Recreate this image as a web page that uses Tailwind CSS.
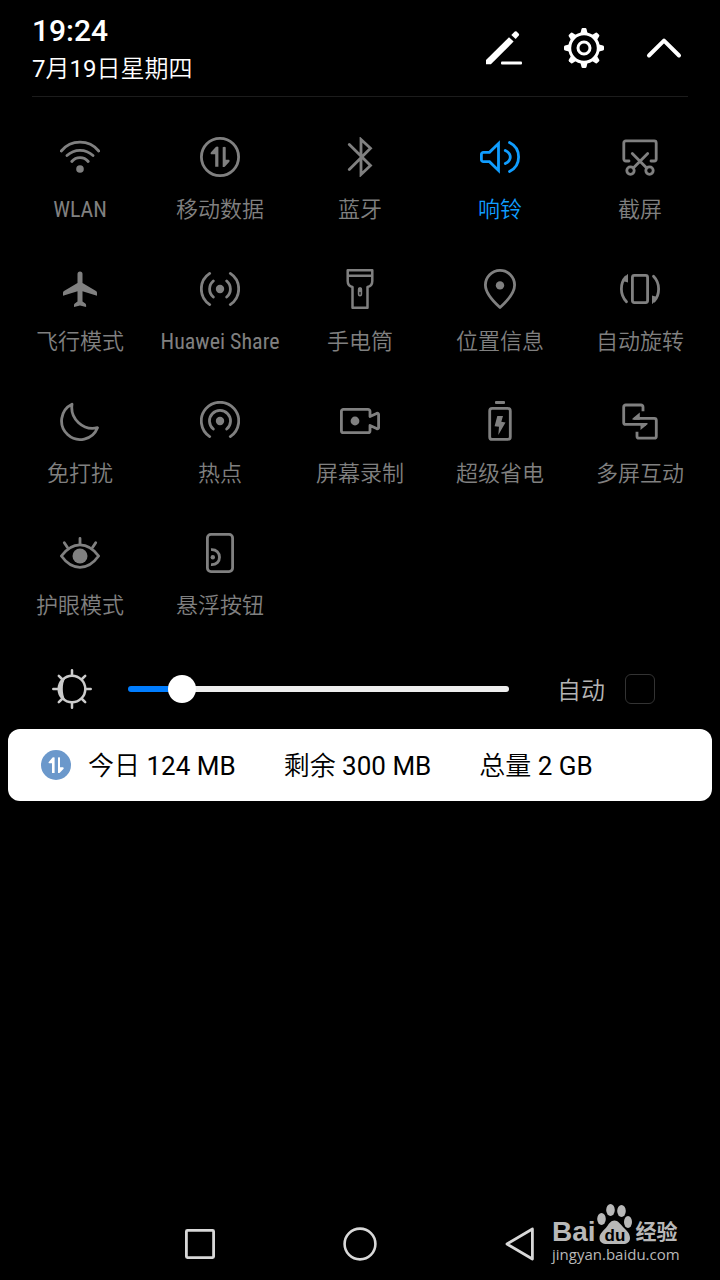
<!DOCTYPE html>
<html lang="zh-CN">
<head>
  <meta charset="UTF-8" />
  <meta name="viewport" content="width=device-width, initial-scale=1.0"/>
  <title>控制中心</title>
  <script src="https://cdn.jsdelivr.net/npm/@tailwindcss/browser@4"></script>
</head>
<body class="bg-black text-white min-h-screen flex flex-col relative font-[Roboto,'Noto_Sans_CJK_SC',sans-serif]">

  <!-- Header -->
  <header class="mx-8 pt-3 pb-2 flex items-center justify-between border-b border-[#1c1c1c]">
    <div>
      <h1 class="text-[30px] leading-[38px] font-medium">19:24</h1>
      <p class="text-2xl leading-[38px]">7<span class="font-[350]">月</span>19<span class="font-[350]">日星期四</span></p>
    </div>
    <div class="flex gap-10 pr-1 pb-1">
      <button type="button" aria-label="编辑">
        <svg class="size-10" viewBox="0 0 40 40" fill="currentColor">
          <path d="M2 36.3V32L25 9.3L29.6 13.6L6.9 36.3Z"/>
          <path d="M30.8 3.6q1-.7 1.8 0l2.2 2.2q.8.9 0 1.8L31.7 11 27.3 6.9Z"/>
          <rect x="17" y="33.6" width="21" height="3" rx="1"/>
        </svg>
      </button>
      <button type="button" aria-label="设置">
        <svg class="size-10" viewBox="0 0 40 40" fill="none" stroke="currentColor">
          <circle cx="20" cy="20" r="14.3" stroke-width="3"/>
          <circle cx="20" cy="20" r="6" stroke-width="3"/>
          <g fill="currentColor" stroke="none">
            <path id="tooth" d="M16.3 6L17.5 1q.3-1 1.2-1h2.6q.9 0 1.2 1L23.7 6Z"/>
            <use href="#tooth" transform="rotate(45 20 20)"/>
            <use href="#tooth" transform="rotate(90 20 20)"/>
            <use href="#tooth" transform="rotate(135 20 20)"/>
            <use href="#tooth" transform="rotate(180 20 20)"/>
            <use href="#tooth" transform="rotate(225 20 20)"/>
            <use href="#tooth" transform="rotate(270 20 20)"/>
            <use href="#tooth" transform="rotate(315 20 20)"/>
          </g>
        </svg>
      </button>
      <button type="button" aria-label="收起">
        <svg class="size-10" viewBox="0 0 40 40" fill="none" stroke="currentColor" stroke-width="4" stroke-linecap="round" stroke-linejoin="round">
          <path d="M5 27.5L20 12.7L35 27.5"/>
        </svg>
      </button>
    </div>
  </header>

  <!-- Shortcuts -->
  <main>
    <div class="grid grid-cols-5 px-[10px] pt-10 text-[22px] leading-[34px] text-[#808080] whitespace-nowrap">
      <button type="button" class="flex flex-col items-center gap-4 pb-[42px]">
        <svg class="size-10" viewBox="0 0 40 40" fill="none" stroke="currentColor" stroke-width="2.8" stroke-linecap="round">
          <path d="M1.3 14A24.3 24.3 0 0 1 38.7 14M7 18.5A18.8 18.8 0 0 1 33 18.5M11.8 24.5A10.6 10.6 0 0 1 28.2 24.5"/>
          <circle cx="20" cy="32" r="3.8" fill="currentColor" stroke="none"/>
        </svg>
        <span class="font-['Roboto_Condensed',Roboto,sans-serif]">WLAN</span>
      </button>
      <button type="button" class="flex flex-col items-center gap-4 pb-[42px]">
        <svg class="size-10" viewBox="0 0 40 40" fill="currentColor">
          <circle cx="20" cy="20" r="18.6" fill="none" stroke="currentColor" stroke-width="2.8"/>
          <path d="M18.4 10V29.7H15.2V17.3H11q-1-.8 0-2L15.8 10q1.3-.8 2.6 0Z"/>
          <path d="M22.7 30V10.3q1.5-1 3 0V22.7H29q1.3.8.3 2L25 29.5q-1 .8-2.3.5Z"/>
        </svg>
        <span class="font-[350]">移动数据</span>
      </button>
      <button type="button" class="flex flex-col items-center gap-4 pb-[42px]">
        <svg class="size-10" viewBox="0 0 40 40" fill="none" stroke="currentColor" stroke-width="2.8" stroke-linecap="round">
          <path d="M9.3 7.6L30.5 28.5L21 37.5V2.5L30.5 11.3L9.3 32.6"/>
        </svg>
        <span class="font-[350]">蓝牙</span>
      </button>
      <button type="button" class="flex flex-col items-center gap-4 pb-[42px] text-[#109dff]">
        <svg class="size-10" viewBox="0 0 40 40" fill="none" stroke="currentColor" stroke-width="2.8" stroke-linecap="round">
          <path d="M18.5 6.5V33.5L9.5 24.7H3.4a2 2 0 0 1-2-2V17.3a2 2 0 0 1 2-2H9.5Z"/>
          <path d="M25.3 13.5Q30.3 16 30.3 20T25.3 26.5M29.5 5.5Q38.6 10 38.6 20T29.5 34.5"/>
        </svg>
        <span class="font-[350]">响铃</span>
      </button>
      <button type="button" class="flex flex-col items-center gap-4 pb-[42px]">
        <svg class="size-10" viewBox="0 0 40 40" fill="none" stroke="currentColor" stroke-width="2.8" stroke-linecap="round">
          <path d="M9 24H5.8a2 2 0 0 1-2-2V5.9a2 2 0 0 1 2-2H34.2a2 2 0 0 1 2 2V22a2 2 0 0 1-2 2H31"/>
          <path d="M12.3 16.5L26.7 31M27.7 16.5L13.3 31"/>
          <circle cx="10.5" cy="33.6" r="3.7"/>
          <circle cx="29.5" cy="33.6" r="3.7"/>
        </svg>
        <span class="font-[350]">截屏</span>
      </button>

      <button type="button" class="flex flex-col items-center gap-4 pb-[42px]">
        <svg class="size-10" viewBox="0 0 40 40" fill="currentColor">
          <path d="M17.5 5a2.5 2.5 0 0 1 5 0V14L36 22q1 .8 1 1.8V26.7L22.5 22.3V32.5L25.3 34.5q.8.6.8 1.5V38L20 36.5 14 38V36q0-.9.8-1.5L17.5 32.5V22.3L3 26.7V23.8q0-1 1-1.8L17.5 14Z"/>
        </svg>
        <span class="font-[350]">飞行模式</span>
      </button>
      <button type="button" class="flex flex-col items-center gap-4 pb-[42px]">
        <svg class="size-10" viewBox="0 0 40 40" fill="none" stroke="currentColor" stroke-width="2.8" stroke-linecap="round">
          <circle cx="20" cy="20" r="4.2" fill="currentColor" stroke="none"/>
          <path d="M13.3 12A10.5 10.5 0 0 0 13.3 28M26.7 12A10.5 10.5 0 0 1 26.7 28M9.7 4.4A18.7 18.7 0 0 0 9.7 35.6M30.3 4.4A18.7 18.7 0 0 1 30.3 35.6"/>
        </svg>
        <span class="font-['Roboto_Condensed',Roboto,sans-serif]">Huawei Share</span>
      </button>
      <button type="button" class="flex flex-col items-center gap-4 pb-[42px]">
        <svg class="size-10" viewBox="0 0 40 40" fill="none" stroke="currentColor" stroke-width="2.5" stroke-linejoin="round">
          <path d="M7.7 1.3H32.3V12C32.3 15.5 30 17.5 27.5 18V38.7H12.5V18C10 17.5 7.7 15.5 7.7 12ZM7.7 6.8H32.3"/>
          <rect x="18.6" y="19" width="2.8" height="7.6" rx="1.4" stroke-width="1.6"/>
          <rect x="18" y="18.5" width="4" height="4.5" rx="1.5" fill="currentColor" stroke="none"/>
        </svg>
        <span class="font-[350]">手电筒</span>
      </button>
      <button type="button" class="flex flex-col items-center gap-4 pb-[42px]">
        <svg class="size-10" viewBox="0 0 40 40" fill="none" stroke="currentColor" stroke-width="2.8" stroke-linejoin="round">
          <path d="M20 38.5C15 34 5.4 24.5 5.4 16A14.6 14.6 0 0 1 34.6 16C34.6 24.5 25 34 20 38.5Z"/>
          <circle cx="20" cy="16.4" r="4.2" fill="currentColor" stroke="none"/>
        </svg>
        <span class="font-[350]">位置信息</span>
      </button>
      <button type="button" class="flex flex-col items-center gap-4 pb-[42px]">
        <svg class="size-10" viewBox="0 0 40 40" fill="none" stroke="currentColor" stroke-width="2.8" stroke-linecap="round">
          <rect x="12.4" y="6.4" width="15.2" height="27.2" rx="2"/>
          <path d="M6.5 32.7Q1.4 27.5 1.4 20T5.8 8M33.5 7.3Q38.6 12.5 38.6 20T34.2 32"/>
          <path d="M8 4.8V13.5L2.8 12Q4.5 7.5 8 4.8ZM32 35.2V26.5L37.2 28Q35.5 32.5 32 35.2Z" fill="currentColor" stroke="none"/>
        </svg>
        <span class="font-[350]">自动旋转</span>
      </button>

      <button type="button" class="flex flex-col items-center gap-4 pb-[42px]">
        <svg class="size-10" viewBox="0 0 40 40" fill="none" stroke="currentColor" stroke-width="2.8" stroke-linejoin="round">
          <path d="M12 3.2A18.6 18.6 0 1 0 37.5 26.7A21 21 0 0 1 12 3.2Z"/>
        </svg>
        <span class="font-[350]">免打扰</span>
      </button>
      <button type="button" class="flex flex-col items-center gap-4 pb-[42px]">
        <svg class="size-10" viewBox="0 0 40 40" fill="none" stroke="currentColor" stroke-width="2.8" stroke-linecap="round">
          <circle cx="20" cy="20" r="4.2" fill="currentColor" stroke="none"/>
          <path d="M13.3 28A10.5 10.5 0 1 1 26.7 28M9.7 35.6A18.7 18.7 0 1 1 30.3 35.6"/>
        </svg>
        <span class="font-[350]">热点</span>
      </button>
      <button type="button" class="flex flex-col items-center gap-4 pb-[42px]">
        <svg class="size-10" viewBox="0 0 40 40" fill="none" stroke="currentColor" stroke-width="2.8" stroke-linejoin="round">
          <path d="M30 15.5V10.3a2 2 0 0 0-2-2H3.4a2 2 0 0 0-2 2V29.7a2 2 0 0 0 2 2H28a2 2 0 0 0 2-2V24.5L36.6 27.6q2 .6 2-1.2V13.6q0-1.8-2-1.2Z"/>
          <circle cx="15" cy="20" r="4.4" fill="currentColor" stroke="none"/>
        </svg>
        <span class="font-[350]">屏幕录制</span>
      </button>
      <button type="button" class="flex flex-col items-center gap-4 pb-[42px]">
        <svg class="size-10" viewBox="0 0 40 40" fill="currentColor">
          <rect x="15" y="0" width="10" height="3" rx="1"/>
          <rect x="9.7" y="7.4" width="20.6" height="31" rx="2.5" fill="none" stroke="currentColor" stroke-width="2.8"/>
          <path d="M17.3 15H23L21.3 20.8L25.5 21.6L18.3 34L19 25.7L14.6 25.2Z"/>
        </svg>
        <span class="font-[350]">超级省电</span>
      </button>
      <button type="button" class="flex flex-col items-center gap-4 pb-[42px]">
        <svg class="size-10" viewBox="0 0 40 40" fill="none" stroke="currentColor" stroke-width="2.8">
          <path d="M23 10.3V6a2 2 0 0 0-2-2H5.7a2 2 0 0 0-2 2V21.4a2 2 0 0 0 2 2H26"/>
          <path d="M14 17.4H34.3a2 2 0 0 1 2 2V35.2a2 2 0 0 1-2 2H19a2 2 0 0 1-2-2V30.7"/>
          <path d="M19.8 11.5V18.7H12.5V17.5ZM20.5 29V22.1H27.5V23.3Z" fill="currentColor" stroke="none"/>
        </svg>
        <span class="font-[350]">多屏互动</span>
      </button>

      <button type="button" class="flex flex-col items-center gap-4 pb-[42px]">
        <svg class="size-10" viewBox="0 0 40 40" fill="none" stroke="currentColor" stroke-width="2.8" stroke-linecap="round" stroke-linejoin="round">
          <path d="M1.4 23Q9.5 11.8 20 11.8T38.6 23Q30.5 34.3 20 34.3T1.4 23Z"/>
          <path d="M20 5.5V11M4.3 9.7L7.5 14.5M35.7 9.7L32.5 14.5"/>
          <circle cx="20" cy="23" r="7.5" fill="currentColor" stroke="none"/>
        </svg>
        <span class="font-[350]">护眼模式</span>
      </button>
      <button type="button" class="flex flex-col items-center gap-4 pb-[42px]">
        <svg class="size-10" viewBox="0 0 40 40" fill="none" stroke="currentColor" stroke-width="2.8">
          <rect x="7.4" y="1.4" width="25.2" height="37.2" rx="3.5"/>
          <path d="M11 16.7C16.5 16.3 19.5 20 19.5 24.2S16.5 32 11 31.6"/>
          <circle cx="12.8" cy="24.2" r="2.2" fill="currentColor" stroke="none"/>
        </svg>
        <span class="font-[350]">悬浮按钮</span>
      </button>
    </div>

    <!-- Brightness -->
    <div class="h-12 pl-[52px] pr-[65px] flex items-center">
      <svg class="size-10 shrink-0 text-[#cccccc]" viewBox="0 0 40 40" fill="none" stroke="currentColor" stroke-width="2.5" stroke-linecap="round">
        <circle cx="20" cy="20" r="13.3"/>
        <path d="M13.5 9Q6.7 13 6.7 20T13.5 31Q10.8 27 10.8 20T13.5 9Z" fill="currentColor" stroke="none"/>
        <path d="M20 1.3V6M20 34V38.7M1.3 20H6M34 20H38.7M6.8 6.8L10 10M30 30L33.2 33.2M6.8 33.2L10 30M30 10L33.2 6.8"/>
      </svg>
      <input type="range" min="0" max="1000" value="113" aria-label="亮度" class="flex-1 min-w-0 ml-9 mr-12 h-[6px] rounded-[3px] appearance-none bg-[linear-gradient(to_right,#007dff_14%,#eeeeee_14%)] [&::-webkit-slider-thumb]:appearance-none [&::-webkit-slider-thumb]:size-7 [&::-webkit-slider-thumb]:rounded-full [&::-webkit-slider-thumb]:bg-white"/>
      <label for="auto" class="pt-1 text-2xl font-[350] text-[#b4b4b4]">自动</label>
      <input id="auto" type="checkbox" class="appearance-none ml-5 size-[30px] rounded-md border border-[#333333] checked:bg-[#007dff]"/>
    </div>

    <!-- Data usage -->
    <section class="mt-4 mx-2 h-[72px] pl-8 rounded-xl bg-white text-black text-[26px] flex items-center whitespace-nowrap">
      <svg class="size-8 mr-4 shrink-0" viewBox="0 0 32 32" fill="#ffffff">
        <circle cx="16" cy="16" r="15" fill="#6b98cb"/>
        <path d="M14.6 8.5V24H12V14.3H9q-1-.6 0-1.6L12.5 8.5q1-.6 2.1 0Z"/>
        <path d="M18 24V8.5q1-.6 2 0V18.3H23q1.3.6.4 1.6L19.8 23.7q-.8.6-1.8.3Z"/>
      </svg>
      <div class="flex gap-12 pt-0.5">
        <p><span class="font-[350]">今日</span> 124 MB</p>
        <p><span class="font-[350]">剩余</span> 300 MB</p>
        <p><span class="font-[350]">总量</span> 2 GB</p>
      </div>
    </section>
  </main>

  <!-- Navigation bar -->
  <nav class="mt-auto h-[72px] flex items-center justify-center gap-[120px] text-[#d8d8d8]">
    <button type="button" aria-label="最近任务">
      <svg class="size-10" viewBox="0 0 40 40" fill="none" stroke="currentColor" stroke-width="2.8">
        <rect x="6.4" y="6.4" width="27.2" height="27.2" rx="1"/>
      </svg>
    </button>
    <button type="button" aria-label="主页">
      <svg class="size-10" viewBox="0 0 40 40" fill="none" stroke="currentColor" stroke-width="2.6">
        <circle cx="20" cy="20" r="15.4"/>
      </svg>
    </button>
    <button type="button" aria-label="返回">
      <svg class="size-10" viewBox="0 0 40 40" fill="none" stroke="currentColor" stroke-width="2.8" stroke-linejoin="round">
        <path d="M32.4 5L7 20L32.4 35Z"/>
      </svg>
    </button>
  </nav>

  <!-- Watermark -->
  <div class="absolute right-10 bottom-4 w-32 text-[#b8b8b8]">
    <div class="flex items-end">
      <span class="text-[28px] leading-6 font-bold font-['Liberation_Sans',sans-serif]">Bai</span>
      <svg class="w-9 h-10 mr-1 shrink-0" viewBox="0 0 36 40" fill="currentColor">
        <ellipse cx="5.5" cy="15" rx="4.3" ry="6"/>
        <ellipse cx="14.5" cy="6" rx="4.3" ry="6"/>
        <ellipse cx="25.5" cy="7" rx="4.3" ry="6"/>
        <ellipse cx="32" cy="18" rx="4" ry="6"/>
        <path d="M18.5 16.5C22 16.5 24.5 20 27 23C30.5 26.5 34 29 34 34C34 38 31 40 27 40H11C6.5 40 3.5 38 3.5 34C3.5 29 8 26.5 11 22.5C13 19.5 15 16.5 18.5 16.5Z"/>
        <text x="19" y="37" text-anchor="middle" fill="#000000" font-family="Liberation Sans, sans-serif" font-weight="bold" font-size="17">du</text>
      </svg>
      <span class="text-[21px] leading-6 font-bold">经验</span>
    </div>
    <p class="text-[15px] leading-5 font-['Open_Sans',sans-serif]">jingyan.baidu.com</p>
  </div>
</body>
</html>
